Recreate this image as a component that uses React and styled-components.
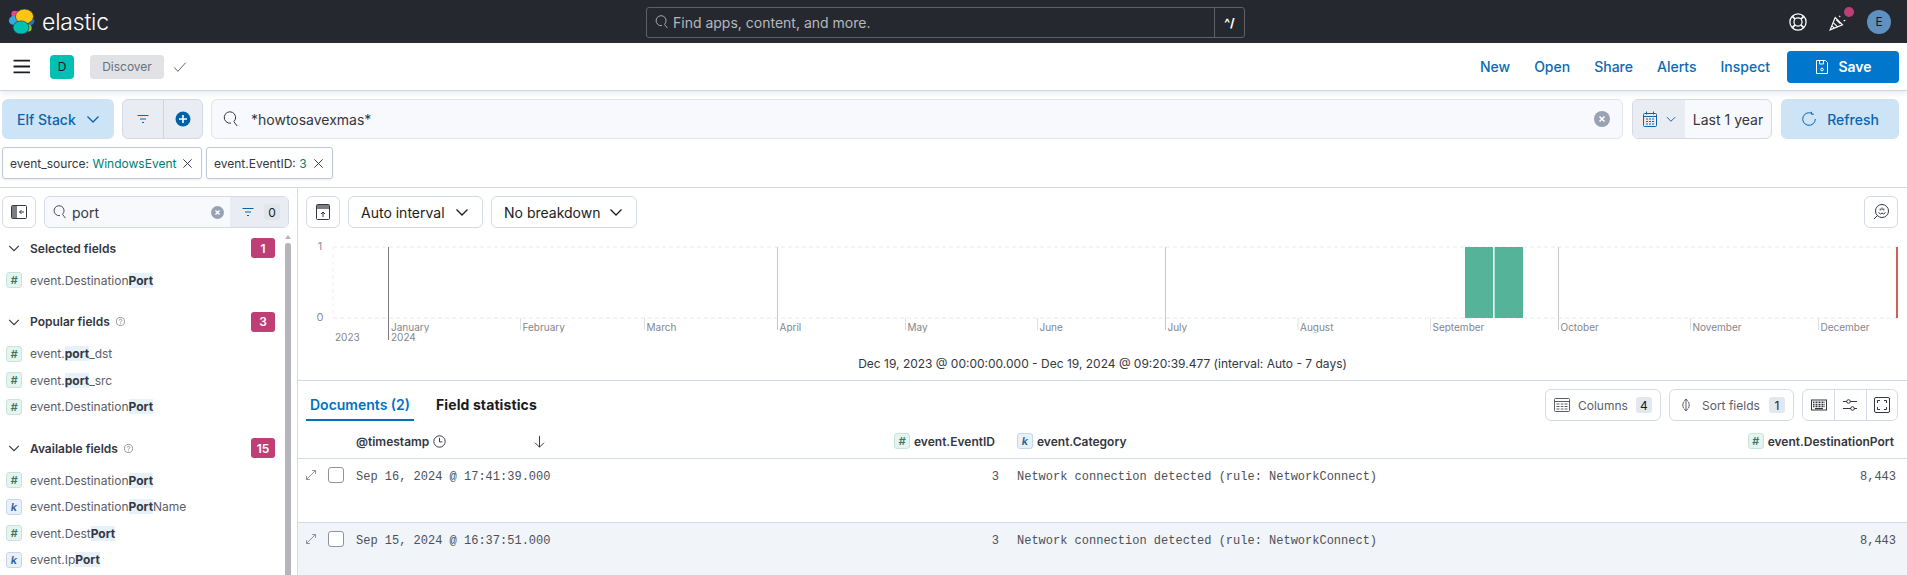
import React from 'react'
import styled, { createGlobalStyle } from 'styled-components'

const GlobalStyle = createGlobalStyle`
  html, body {
    margin: 0;
    padding: 0;
    height: 575px;
    overflow: hidden;
    background: #fff;
    font-family: Inter, "Liberation Sans", sans-serif;
    color: #343741;
  }
  * { box-sizing: border-box; }
`

const Page = styled.div`
  width: 1907px;
  height: 575px;
  overflow: hidden;
`

/* ---------- top chrome ---------- */

const TopBar = styled.header`
  height: 43px;
  background: #25282f;
  display: grid;
  grid-template-columns: 646px 599px 1fr;
  align-items: center;
`

const Brand = styled.div`
  display: flex;
  align-items: center;
  padding-left: 8px;
  gap: 7px;
  color: #fff;
  font-size: 23px;
  font-weight: 300;
  letter-spacing: -0.2px;
`

const GlobalSearch = styled.div`
  height: 31px;
  margin-top: 1px;
  border: 1px solid #5f6167;
  border-radius: 3px;
  display: flex;
  align-items: center;
  color: #b6b8be;
  font-size: 14px;
  padding-left: 8px;
  gap: 4px;
`

const GlobalSearchText = styled.span`
  flex: 1;
`

const ShortcutKey = styled.span`
  width: 30px;
  height: 100%;
  border-left: 1px solid #5f6167;
  display: flex;
  align-items: center;
  justify-content: center;
  color: #fff;
  font-size: 12px;
  font-weight: 700;
`

const TopActions = styled.div`
  display: flex;
  align-items: center;
  justify-content: flex-end;
  padding-right: 16px;
  color: #fff;
`

const IconSlot = styled.span`
  display: flex;
  position: relative;
  margin-right: ${p => p.$gap}px;
`

const Dot = styled.span`
  position: absolute;
  top: -6px;
  right: -7px;
  width: 10px;
  height: 10px;
  border-radius: 50%;
  background: #bd3f78;
`

const Avatar = styled.span`
  width: 24px;
  height: 24px;
  border-radius: 50%;
  background: #5e90c0;
  color: #16171c;
  font-size: 12px;
  display: flex;
  align-items: center;
  justify-content: center;
`

const AppBar = styled.div`
  height: 48px;
  border-bottom: 1px solid #cfd4de;
  box-shadow: 0 2px 6px rgba(152, 162, 179, 0.25);
  position: relative;
  display: flex;
  align-items: center;
  padding: 0 8px 0 13px;
  background: #fff;
`

const Hamburger = styled.span`
  display: flex;
  color: #1a1c21;
  margin-right: 20px;
`

const SpaceTile = styled.span`
  width: 24px;
  height: 24px;
  border-radius: 4px;
  background: #00bfb3;
  color: #16171c;
  font-size: 12px;
  display: flex;
  align-items: center;
  justify-content: center;
  margin-right: 16px;
`

const Crumb = styled.span`
  width: 74px;
  height: 24px;
  border-radius: 4px;
  background: #e0e2e6;
  color: #69707d;
  font-size: 12px;
  display: flex;
  align-items: center;
  justify-content: center;
  margin-right: 9px;
`

const CheckWrap = styled.span`
  display: flex;
  color: #4a4e57;
  flex: 1;
`

const NavLink = styled.a`
  color: #0b6bb3;
  font-size: 14px;
  font-weight: 500;
  margin-right: 24px;
`

const SaveButton = styled.button`
  width: 112px;
  height: 32px;
  margin-left: -7px;
  border: 0;
  border-radius: 4px;
  background: #0077cc;
  color: #fff;
  font: 600 14px Inter, sans-serif;
  display: flex;
  align-items: center;
  justify-content: center;
  gap: 8px;
`

/* ---------- query bar ---------- */

const QueryArea = styled.div`
  border-bottom: 1px solid #d3dae6;
  padding: 8px 8px 8px 2px;
  height: 97px;
`

const QueryRow = styled.div`
  display: flex;
  height: 40px;
  gap: 8px;
`

const DataViewButton = styled.div`
  width: 112px;
  background: #cce4f5;
  border-radius: 6px;
  color: #0b64b0;
  font-size: 14px;
  font-weight: 500;
  display: flex;
  align-items: center;
  padding-left: 15px;
  gap: 9px;
`

const FilterGroup = styled.div`
  width: 81px;
  display: grid;
  grid-template-columns: 1fr 1fr;
  background: #e9edf3;
  border: 1px solid #d3dae6;
  border-radius: 6px;
  color: #0b64b0;
`

const FilterCell = styled.span`
  display: flex;
  align-items: center;
  justify-content: center;
  & + & { border-left: 1px solid #cdd3df; }
`

const QueryInput = styled.div`
  flex: 1;
  background: #f7f9fc;
  border: 1px solid #e0e5ee;
  border-radius: 6px;
  display: flex;
  align-items: center;
  padding: 0 12px 0 11px;
  gap: 12px;
  font-size: 14px;
  color: #343741;
`

const QueryText = styled.span`
  flex: 1;
`

const DateBox = styled.div`
  width: 140px;
  margin-left: 1px;
  display: flex;
  border: 1px solid #d3dae6;
  border-radius: 6px;
  overflow: hidden;
  background: #f7f9fc;
  font-size: 14px;
`

const DateIcons = styled.span`
  width: 52px;
  background: #e9edf3;
  color: #0b64b0;
  display: flex;
  align-items: center;
  justify-content: center;
  gap: 7px;
`

const DateText = styled.span`
  flex: 1;
  display: flex;
  align-items: center;
  justify-content: center;
  white-space: nowrap;
`

const RefreshButton = styled.div`
  width: 118px;
  margin-left: 1px;
  background: #cce4f5;
  border-radius: 6px;
  color: #0b64b0;
  font-size: 14px;
  font-weight: 500;
  display: flex;
  align-items: center;
  justify-content: center;
  gap: 10px;
`

const ChipRow = styled.div`
  display: flex;
  gap: 4px;
  margin-top: 8px;
`

const Chip = styled.div`
  height: 32px;
  width: ${p => p.$width}px;
  border: 1px solid #c2c9d6;
  border-radius: 3px;
  box-shadow: 0 1px 2px rgba(152, 162, 179, 0.2);
  padding: 0 8px 0 7px;
  display: flex;
  align-items: center;
  justify-content: space-between;
  font-size: 12px;
  color: #343741;
`

const ChipValue = styled.span`
  color: #017d73;
`

/* ---------- sidebar ---------- */

const Body = styled.div`
  display: flex;
  height: 387px;
`

const Sidebar = styled.aside`
  width: 298px;
  flex: none;
  border-right: 1px solid #d3dae6;
  padding-top: 8px;
  overflow: hidden;
`

const SideTools = styled.div`
  display: flex;
  padding-left: 2px;
  gap: 8px;
`

const SquareButton = styled.span`
  width: ${p => p.$size || 34}px;
  height: 32px;
  flex: none;
  border: 1px solid #d3dae6;
  border-radius: 6px;
  display: flex;
  align-items: center;
  justify-content: center;
  color: #343741;
`

const FieldSearch = styled.div`
  width: 245px;
  height: 32px;
  background: #f7f9fc;
  border: 1px solid #d3dae6;
  border-radius: 6px;
  display: flex;
  align-items: center;
  overflow: hidden;
  padding-left: 8px;
  font-size: 14px;
  gap: 5px;
`

const FieldSearchText = styled.span`
  flex: 1;
`

const FieldFilter = styled.span`
  width: 58px;
  height: 100%;
  margin-left: 1px;
  background: #e9edf3;
  color: #0b64b0;
  display: flex;
  align-items: center;
  justify-content: flex-end;
  padding-right: 8px;
  gap: 8px;
`

const ZeroBadge = styled.span`
  width: 16px;
  height: 16px;
  border-radius: 3px;
  background: #e0e5ee;
  color: #1a1c21;
  font-size: 12px;
  display: flex;
  align-items: center;
  justify-content: center;
`

const SideScroll = styled.div`
  display: flex;
  height: 347px;
`

const FieldColumn = styled.div`
  width: 285px;
  padding-top: 10px;
`

const ScrollTrack = styled.div`
  width: 6px;
  margin-top: 15px;
  background: #b4b6bc;
  border-radius: 3px 3px 0 0;
  position: relative;
  &::before {
    content: '';
    position: absolute;
    top: -8px;
    left: 0;
    border: 3px solid transparent;
    border-top: 0;
    border-bottom: 4px solid #b4b6bc;
  }
`

const SectionHead = styled.div`
  height: 20px;
  display: flex;
  align-items: center;
  padding: 0 10px 0 7px;
  margin: ${p => (p.$first ? 0 : 18)}px 0 9px;
  font-size: 12px;
  font-weight: 600;
  color: #343741;
`

const SectionChevron = styled.span`
  display: flex;
  width: 23px;
  color: #343741;
`

const SectionTitle = styled.span`
  flex: 1;
  display: flex;
  align-items: center;
  gap: 6px;
`

const CountBadge = styled.span`
  width: 24px;
  height: 20px;
  background: #bd3f75;
  color: #fff;
  border-radius: 3px;
  font-size: 12px;
  font-weight: 600;
  display: flex;
  align-items: center;
  justify-content: center;
`

const FieldRow = styled.div`
  height: 26.5px;
  display: flex;
  align-items: center;
  padding-left: 6px;
  gap: 8px;
  font-size: 12px;
  color: #5a5e68;
`

const Token = styled.span`
  width: 16px;
  height: 16px;
  flex: none;
  border-radius: 3px;
  border: 1px solid ${p => (p.$kind === 'k' ? '#c5d7ea' : '#c6e5dc')};
  background: ${p => (p.$kind === 'k' ? '#e9f0f8' : '#e6f4f0')};
  color: ${p => (p.$kind === 'k' ? '#2f5f93' : '#3a7565')};
  font-size: 11px;
  font-weight: 600;
  font-style: italic;
  display: flex;
  align-items: center;
  justify-content: center;
`

const Match = styled.b`
  background: #e6f1fa;
  font-weight: 700;
  color: #343741;
`

/* ---------- main ---------- */

const Main = styled.main`
  flex: 1;
  min-width: 0;
  overflow: hidden;
  display: flex;
  flex-direction: column;
  & > * { flex: none; }
`

const ChartTools = styled.div`
  display: flex;
  padding: 8px 9px 0 8px;
  gap: 8px;
  height: 40px;
`

const SelectButton = styled.div`
  width: ${p => p.$width}px;
  height: 32px;
  border: 1px solid #d3dae6;
  border-radius: 6px;
  display: flex;
  align-items: center;
  justify-content: space-between;
  padding: 0 12px;
  font-size: 14px;
  color: #1a1c21;
`

const Spacer = styled.span`
  flex: 1;
`

const ChartSvg = styled.svg`
  display: block;
  font-family: Inter, sans-serif;
`

const TimeRange = styled.div`
  height: 36px;
  border-bottom: 1px solid #d3dae6;
  padding-top: 11px;
  text-align: center;
  font-size: 12px;
  line-height: 16px;
  color: #343741;
`

const TabBar = styled.div`
  height: 40px;
  display: flex;
  align-items: flex-start;
  padding: 8px 9px 0 8px;
`

const Tab = styled.div`
  height: 32px;
  padding: 0 ${p => (p.$active ? 4 : 0)}px;
  margin-right: 22px;
  font-size: 14px;
  font-weight: ${p => (p.$active ? 600 : 700)};
  letter-spacing: ${p => (p.$active ? 0 : 0.1)}px;
  line-height: 32px;
  color: ${p => (p.$active ? '#0071c2' : '#1a1c21')};
  border-bottom: 2px solid ${p => (p.$active ? '#0071c2' : 'transparent')};
`

const GridButton = styled.div`
  height: 32px;
  width: ${p => p.$width}px;
  margin-left: 8px;
  border: 1px solid #d3dae6;
  border-radius: 6px;
  display: flex;
  align-items: center;
  padding: 0 8px;
  gap: 8px;
  font-size: 12px;
  color: #5a5e68;
`

const GridLabel = styled.span`
  flex: 1;
`

const NumBadge = styled.span`
  width: 16px;
  height: 16px;
  border-radius: 3px;
  background: #e3e8f0;
  color: #1a1c21;
  display: flex;
  align-items: center;
  justify-content: center;
`

const ButtonGroup = styled.div`
  display: grid;
  grid-template-columns: repeat(3, 1fr);
  width: 96px;
  height: 32px;
  margin-left: 8px;
  border: 1px solid #d3dae6;
  border-radius: 6px;
  color: #343741;
`

const GroupCell = styled.span`
  display: flex;
  align-items: center;
  justify-content: center;
  & + & { border-left: 1px solid #d3dae6; }
`

const TableGrid = styled.div`
  display: grid;
  grid-template-columns: 52px 538px 123px 589px 1fr;
  height: ${p => p.$height}px;
  border-bottom: 1px solid #d3dae6;
  background: ${p => (p.$alt ? '#f1f4f8' : '#fff')};
  ${p => p.$alt && 'border-bottom: 0;'}
`

const HeadCell = styled.div`
  display: flex;
  align-items: center;
  padding-top: 3px;
  justify-content: ${p => (p.$right ? 'flex-end' : 'flex-start')};
  padding-left: ${p => p.$pl || 0}px;
  padding-right: ${p => p.$pr || 0}px;
  gap: 4px;
  font-size: 12px;
  font-weight: 600;
  color: #343741;
`

const SortArrow = styled.span`
  display: flex;
  margin-left: 83px;
  color: #343741;
`

const RowControls = styled.div`
  display: flex;
  align-items: flex-start;
  padding: 8px 0 0 7px;
  gap: 10px;
  color: #8a8f99;
`

const ExpandIcon = styled.span`
  display: flex;
  width: 13px;
  margin-top: 2px;
`

const Checkbox = styled.span`
  width: 16px;
  height: 16px;
  border: 1px solid #8f949e;
  border-radius: 3px;
  background: #fff;
`

const Cell = styled.div`
  padding: 10px ${p => p.$pr || 0}px 0 ${p => p.$pl || 0}px;
  text-align: ${p => (p.$right ? 'right' : 'left')};
  font-family: "Liberation Mono", monospace;
  font-size: 12px;
  line-height: 16px;
  color: #4d5059;
  white-space: nowrap;
`

/* ---------- icons ---------- */

const Svg = ({ size = 16, children, ...rest }) => (
  <svg width={size} height={size} viewBox="0 0 16 16" fill="none" stroke="currentColor" strokeWidth="1" {...rest}>
    {children}
  </svg>
)

const Logo = () => (
  <svg width="27" height="26" viewBox="7.5 6.5 27 26">
    <ellipse cx="14.5" cy="11.5" rx="3.6" ry="3.2" fill="#e8488b" />
    <ellipse cx="13" cy="18" rx="4.6" ry="4.4" fill="#36a9e0" />
    <ellipse cx="29.5" cy="18.5" rx="4.4" ry="4.4" fill="#1a79c7" />
    <ellipse cx="28" cy="25.5" rx="3.2" ry="3.6" fill="#8ac43f" />
    <ellipse cx="24" cy="14" rx="9" ry="7.4" fill="#fec514" stroke="#25282f" strokeWidth="0.6" />
    <ellipse cx="20.5" cy="25" rx="8" ry="6.6" fill="#00bfb3" stroke="#25282f" strokeWidth="0.6" />
  </svg>
)

const SearchIcon = ({ size = 16 }) => (
  <Svg size={size}>
    <path d="M11 10.5A5.7 5.7 0 1 0 8 12.1" />
    <path d="M10.8 10.6l3.4 4.4" />
  </Svg>
)

const Chevron = ({ size = 16 }) => (
  <Svg size={size} strokeWidth="1.3"><path d="M2.5 5.5L8 11l5.5-5.5" /></Svg>
)

const FilterIcon = () => (
  <Svg><path d="M2.5 4.5h11M5 8h6M7 11.5h2" /></Svg>
)

const PlusCircle = () => (
  <Svg>
    <circle cx="8" cy="8" r="7.5" fill="#0061a6" stroke="none" />
    <path d="M8 4v8M4 8h8" stroke="#fff" strokeWidth="1.6" />
  </Svg>
)

const ClearIcon = ({ size = 16, color = '#98a2b3' }) => (
  <Svg size={size}>
    <circle cx="8" cy="8" r="8" fill={color} stroke="none" />
    <path d="M5.5 5.5l5 5M10.5 5.5l-5 5" stroke="#fff" strokeWidth="1.6" />
  </Svg>
)

const CloseIcon = () => (
  <Svg size={11}><path d="M2 2l12 12M14 2L2 14" strokeWidth="1.4" /></Svg>
)

const CalendarIcon = () => (
  <Svg>
    <rect x="1.5" y="2.5" width="13" height="13" rx="1" />
    <path d="M1.5 5.5h13M4.5 0.5v3M11.5 0.5v3" />
    <path d="M4 8h2M7 8h2M10 8h2M4 10.5h2M7 10.5h2M10 10.5h2M4 13h2M7 13h2M10 13h2" strokeWidth="1.2" />
  </Svg>
)

const RefreshIcon = () => (
  <Svg>
    <path d="M11.2 2.6A6.3 6.3 0 1 0 14.3 8" />
    <path d="M10.5 0.8v2.4h2.4" />
  </Svg>
)

const SaveIcon = () => (
  <Svg>
    <path d="M2.5 1.5h9l2 2v11h-11z" />
    <path d="M5.5 1.5v3.5h4V1.5" />
    <circle cx="8" cy="10.5" r="1.3" />
  </Svg>
)

const HelpIcon = () => (
  <Svg size={18}>
    <circle cx="8" cy="8" r="7.2" strokeWidth="1.1" />
    <circle cx="8" cy="8" r="3.6" strokeWidth="1.1" />
    <path d="M3 3l2.4 2.4M13 3l-2.4 2.4M3 13l2.4-2.4M13 13l-2.4-2.4" strokeWidth="1.6" />
  </Svg>
)

const CheerIcon = () => (
  <Svg size={18}>
    <path d="M5.5 4L1 15l11-4.5z" />
    <path d="M3.8 8.5l4 4M2.7 11.5l2 2M6.5 6l3.5 3.5" />
    <path d="M9 2.5l1 1M13 7l1.5-.5" />
  </Svg>
)

const MenuIcon = () => (
  <Svg size={17}><path d="M0.5 2.5h16M0.5 8h16M0.5 13.5h16" strokeWidth="1.7" /></Svg>
)

const CheckIcon = () => (
  <Svg size={14}><path d="M1.5 8.5L5.5 13 14.5 3" /></Svg>
)

const Hatch = ({ x, y, w, h }) => (
  <rect x={x} y={y} width={w} height={h} fill="#343741" opacity="0.65" stroke="none" />
)

const PanelToggleIcon = () => (
  <Svg>
    <rect x="0.5" y="1.5" width="15" height="13" rx="1" />
    <Hatch x={1} y={2} w={5} h={12} />
    <path d="M13 8H8.5M10.5 6L8.5 8l2 2" />
  </Svg>
)

const ChartUpIcon = () => (
  <Svg>
    <rect x="1.5" y="0.5" width="13" height="15" rx="1" />
    <Hatch x={2} y={1} w={12} h={4} />
    <path d="M8 13V8M6 10l2-2 2 2" />
  </Svg>
)

const SuggestIcon = () => (
  <Svg>
    <circle cx="9" cy="7" r="6.5" />
    <path d="M4.4 11.6L1 15" />
    <path d="M7.2 6.5V4.5M9 6V3.5M10.8 6.5V4.5M5.5 8.5l2 1.5 1.5-1 1.5 1 2-1.5" />
  </Svg>
)

const ColumnsIcon = () => (
  <Svg>
    <rect x="0.5" y="1.5" width="15" height="13" rx="1" />
    <path d="M0.5 4.5h15M2.5 7h3M6.8 7h2.6M10.5 7h3M2.5 9.5h3M6.8 9.5h2.6M10.5 9.5h3M2.5 12h3M6.8 12h2.6M10.5 12h3" />
  </Svg>
)

const SortIcon = () => (
  <Svg>
    <path d="M8 2v12M6 4.5L8 2l2 2.5M6 11.5L8 14l2-2.5" />
    <path d="M5.5 5C4.6 7 4.6 9 5.5 11M10.5 5c.9 2 .9 4 0 6" />
  </Svg>
)

const KeyboardIcon = () => (
  <Svg>
    <rect x="0.5" y="3" width="15" height="10" fill="none" />
    <path d="M2 5.2h12M2 7.4h12M2 9.6h12" strokeDasharray="1 .5" strokeWidth="1.5" />
    <path d="M4 11.6h8" strokeWidth="1.2" />
  </Svg>
)

const SlidersIcon = () => (
  <Svg>
    <path d="M1 4.5h4M8 4.5h7M1 11.5h8M12 11.5h3" />
    <circle cx="6.5" cy="4.5" r="1.8" />
    <circle cx="10.5" cy="11.5" r="1.8" />
  </Svg>
)

const FullIcon = () => (
  <Svg>
    <rect x="0.5" y="0.5" width="15" height="15" rx="1.5" />
    <path d="M3.5 6V3.5H6M10 3.5h2.5V6M12.5 10v2.5H10M6 12.5H3.5V10" />
  </Svg>
)

const ClockIcon = () => (
  <Svg size={13} strokeWidth="1.2">
    <circle cx="8" cy="8" r="7" />
    <path d="M8 3.5V8.5h3.5" />
  </Svg>
)

const DownArrow = () => (
  <Svg size={13} strokeWidth="1.2"><path d="M8 1v14M2.5 9.5L8 15l5.5-5.5" /></Svg>
)

const HelpSmall = () => (
  <Svg size={9}>
    <circle cx="8" cy="8" r="7.2" stroke="#7b7f88" strokeWidth="1.4" />
    <path d="M5.8 6.2c0-3 4.5-3 4.5 0 0 2-2.3 1.8-2.3 3.6M8 11.5v1.6" stroke="#7b7f88" strokeWidth="1.4" />
  </Svg>
)

const ExpandGlyph = () => (
  <Svg size={12}>
    <path d="M2 14L14 2M9.5 2H14v4.5M2 9.5V14h4.5" strokeWidth="1.3" />
  </Svg>
)

/* ---------- data ---------- */

const months = [
  { x: 520, label: 'February' },
  { x: 644, label: 'March' },
  { x: 777, label: 'April', tall: true },
  { x: 905, label: 'May' },
  { x: 1037, label: 'June' },
  { x: 1165, label: 'July', tall: true },
  { x: 1297.5, label: 'August' },
  { x: 1430, label: 'September' },
  { x: 1558, label: 'October', tall: true },
  { x: 1690, label: 'November' },
  { x: 1818, label: 'December' },
]

const sections = [
  {
    title: 'Selected fields', count: 1,
    fields: [['#', 'event.Destination', 'Port', '']],
  },
  {
    title: 'Popular fields', count: 3, help: true,
    fields: [
      ['#', 'event.', 'port', '_dst'],
      ['#', 'event.', 'port', '_src'],
      ['#', 'event.Destination', 'Port', ''],
    ],
  },
  {
    title: 'Available fields', count: 15, help: true,
    fields: [
      ['#', 'event.Destination', 'Port', ''],
      ['k', 'event.Destination', 'Port', 'Name'],
      ['#', 'event.Dest', 'Port', ''],
      ['k', 'event.Ip', 'Port', ''],
    ],
  },
]

const rows = ['Sep 16, 2024 @ 17:41:39.000', 'Sep 15, 2024 @ 16:37:51.000']

// page coordinates, the chart starts at (298, 228)
const ox = x => x - 298
const oy = y => y - 228

const Histogram = () => (
  <ChartSvg width="1609" height="117" viewBox="0 0 1609 117">
    <defs>
      <clipPath id="monthClip"><rect x="0" y="0" width="1609" height={oy(332.5)} /></clipPath>
      <clipPath id="yearClip"><rect x="0" y="0" width="1609" height={oy(341)} /></clipPath>
    </defs>
    <text x={ox(320)} y={oy(250)} fontSize="11" fill="#8c8f97" textAnchor="middle">1</text>
    <text x={ox(320)} y={oy(321)} fontSize="11" fill="#8c8f97" textAnchor="middle">0</text>
    <path d={`M${ox(333)} ${oy(247)}H${ox(1898)}M${ox(333)} ${oy(318)}H${ox(1898)}`} stroke="#e9eaee" strokeDasharray="4 3" />
    <path d={`M${ox(333)} ${oy(247)}V${oy(318)}`} stroke="#eeeff2" strokeDasharray="4 3" />
    <rect x={ox(1465)} y={oy(247)} width="28" height="71" fill="#54b399" />
    <rect x={ox(1494.6)} y={oy(247)} width="28.4" height="71" fill="#54b399" />
    <rect x={ox(1896)} y={oy(247)} width="2" height="71" fill="#cf5f5c" />
    <path d={`M${ox(388.5)} ${oy(247)}V${oy(340)}`} stroke="#7d7d7d" />
    {months.map(m => (
      <path key={m.label} d={`M${ox(m.x) + 0.5} ${oy(m.tall ? 247 : 318)}V${oy(330)}`} stroke={m.tall ? '#c8c8c8' : '#dedfe2'} />
    ))}
    <g clipPath="url(#monthClip)" fontSize="10" fill="#83868f">
      <text x={ox(391)} y={oy(331)}>January</text>
      {months.map(m => (
        <text key={m.label} x={ox(m.x) + 2.5} y={oy(331)}>{m.label}</text>
      ))}
    </g>
    <g clipPath="url(#yearClip)" fontSize="10" fill="#83868f">
      <text x={ox(335)} y={oy(341)}>2023</text>
      <text x={ox(391)} y={oy(341)}>2024</text>
    </g>
  </ChartSvg>
)

export default function App() {
  return (
    <Page>
      <GlobalStyle />
      <TopBar>
        <Brand><Logo />elastic</Brand>
        <GlobalSearch>
          <SearchIcon size={14} />
          <GlobalSearchText>Find apps, content, and more.</GlobalSearchText>
          <ShortcutKey>^/</ShortcutKey>
        </GlobalSearch>
        <TopActions>
          <IconSlot $gap={22}><HelpIcon /></IconSlot>
          <IconSlot $gap={20}><CheerIcon /><Dot /></IconSlot>
          <Avatar>E</Avatar>
        </TopActions>
      </TopBar>

      <AppBar>
        <Hamburger><MenuIcon /></Hamburger>
        <SpaceTile>D</SpaceTile>
        <Crumb>Discover</Crumb>
        <CheckWrap><CheckIcon /></CheckWrap>
        <NavLink>New</NavLink>
        <NavLink>Open</NavLink>
        <NavLink>Share</NavLink>
        <NavLink>Alerts</NavLink>
        <NavLink>Inspect</NavLink>
        <SaveButton><SaveIcon />Save</SaveButton>
      </AppBar>

      <QueryArea>
        <QueryRow>
          <DataViewButton>Elf Stack<Chevron /></DataViewButton>
          <FilterGroup>
            <FilterCell><FilterIcon /></FilterCell>
            <FilterCell><PlusCircle /></FilterCell>
          </FilterGroup>
          <QueryInput>
            <SearchIcon />
            <QueryText>*howtosavexmas*</QueryText>
            <ClearIcon />
          </QueryInput>
          <DateBox>
            <DateIcons><CalendarIcon /><Chevron size={12} /></DateIcons>
            <DateText>Last 1 year</DateText>
          </DateBox>
          <RefreshButton><RefreshIcon />Refresh</RefreshButton>
        </QueryRow>
        <ChipRow>
          <Chip $width={200}>
            <span>event_source: <ChipValue>WindowsEvent</ChipValue></span>
            <CloseIcon />
          </Chip>
          <Chip $width={127}>
            <span>event.EventID: <ChipValue>3</ChipValue></span>
            <CloseIcon />
          </Chip>
        </ChipRow>
      </QueryArea>

      <Body>
        <Sidebar>
          <SideTools>
            <SquareButton><PanelToggleIcon /></SquareButton>
            <FieldSearch>
              <SearchIcon size={14} />
              <FieldSearchText>port</FieldSearchText>
              <ClearIcon size={13} />
              <FieldFilter><FilterIcon /><ZeroBadge>0</ZeroBadge></FieldFilter>
            </FieldSearch>
          </SideTools>
          <SideScroll>
            <FieldColumn>
              {sections.map((s, i) => (
                <React.Fragment key={s.title}>
                  <SectionHead $first={i === 0}>
                    <SectionChevron><Chevron size={14} /></SectionChevron>
                    <SectionTitle>{s.title}{s.help && <HelpSmall />}</SectionTitle>
                    <CountBadge>{s.count}</CountBadge>
                  </SectionHead>
                  {s.fields.map(([kind, before, hit, after], j) => (
                    <FieldRow key={j}>
                      <Token $kind={kind}>{kind}</Token>
                      <span>{before}<Match>{hit}</Match>{after}</span>
                    </FieldRow>
                  ))}
                </React.Fragment>
              ))}
            </FieldColumn>
            <ScrollTrack />
          </SideScroll>
        </Sidebar>

        <Main>
          <ChartTools>
            <SquareButton><ChartUpIcon /></SquareButton>
            <SelectButton $width={135}>Auto interval<Chevron /></SelectButton>
            <SelectButton $width={146}>No breakdown<Chevron /></SelectButton>
            <Spacer />
            <SquareButton><SuggestIcon /></SquareButton>
          </ChartTools>
          <Histogram />
          <TimeRange>Dec 19, 2023 @ 00:00:00.000 - Dec 19, 2024 @ 09:20:39.477 (interval: Auto - 7 days)</TimeRange>

          <TabBar>
            <Tab $active>Documents (2)</Tab>
            <Tab>Field statistics</Tab>
            <Spacer />
            <GridButton $width={116}><ColumnsIcon /><GridLabel>Columns</GridLabel><NumBadge>4</NumBadge></GridButton>
            <GridButton $width={125}><SortIcon /><GridLabel>Sort fields</GridLabel><NumBadge>1</NumBadge></GridButton>
            <ButtonGroup>
              <GroupCell><KeyboardIcon /></GroupCell>
              <GroupCell><SlidersIcon /></GroupCell>
              <GroupCell><FullIcon /></GroupCell>
            </ButtonGroup>
          </TabBar>

          <TableGrid $height={38}>
            <HeadCell />
            <HeadCell $pl={6}>@timestamp <ClockIcon /><SortArrow><DownArrow /></SortArrow></HeadCell>
            <HeadCell $pl={6}><Token $kind="#">#</Token>event.EventID</HeadCell>
            <HeadCell $pl={6}><Token $kind="k">k</Token>event.Category</HeadCell>
            <HeadCell $right $pr={13}><Token $kind="#">#</Token>event.DestinationPort</HeadCell>
          </TableGrid>

          {rows.map((time, i) => (
            <TableGrid key={time} $height={64} $alt={i === 1}>
              <RowControls>
                <ExpandIcon><ExpandGlyph /></ExpandIcon>
                <Checkbox />
              </RowControls>
              <Cell $pl={6}>{time}</Cell>
              <Cell $right $pr={12}>3</Cell>
              <Cell $pl={6}>Network connection detected (rule: NetworkConnect)</Cell>
              <Cell $right $pr={11}>8,443</Cell>
            </TableGrid>
          ))}
        </Main>
      </Body>
    </Page>
  )
}
